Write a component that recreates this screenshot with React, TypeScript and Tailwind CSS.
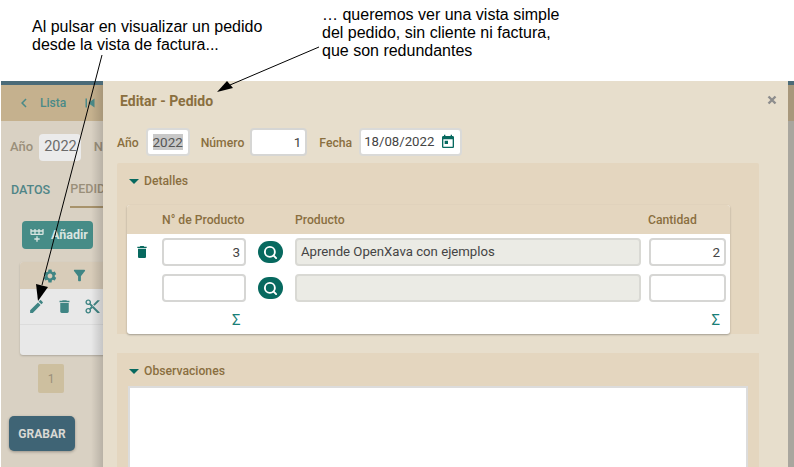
import { Search } from "lucide-react";
import { MdChevronLeft, MdContentCut, MdDelete, MdEdit, MdFilterAlt, MdSettings, MdSkipPrevious, MdToday } from "react-icons/md";

const field = "h-[28px] rounded-[4px] border-2 border-[#d6d6d4] bg-white px-1 text-[13.5px] text-[#444] outline-none";
const readonlyField = "h-[28px] rounded-[4px] border-2 border-[#d9d9d4] bg-[#ebebe5] px-1 text-[13.2px] text-[#444]";

function SearchButton() {
  return (
    <div className="flex h-[22px] w-[25px] items-center justify-center rounded-full bg-[#07695f] text-white">
      <Search size={15} strokeWidth={3} />
    </div>
  );
}

function RowPlusIcon() {
  return (
    <svg viewBox="0 0 24 24" width="16" height="16" fill="currentColor">
      <path d="M22,10A2,2 0 0,1 20,12H4A2,2 0 0,1 2,10V3H4V5H8V3H10V5H14V3H16V5H20V3H22V10M4,10H8V7H4V10M10,10H14V7H10V10M20,10V7H16V10H20M11,14H13V17H16V19H13V22H11V19H8V17H11V14Z" />
    </svg>
  );
}

function BackgroundPanel() {
  return (
    <div className="relative h-[386px] w-[102px] shrink-0 overflow-hidden border-t-4 border-[#4b6b78] bg-[#d9d1c3] font-['Roboto',sans-serif] text-[13px] text-[#9a8f7a]">
      <div className="flex h-[36px] items-center gap-[5px] bg-[#c5b18e] pl-[14px] font-medium text-[#4a8a88]">
        <MdChevronLeft size={18} />
        <span className="w-[38px] pl-[2px] text-[12px]">Lista</span>
        <MdSkipPrevious size={18} />
      </div>
      <div className="flex h-[52px] items-center gap-[6px] pl-[9px] font-medium">
        <span>Año</span>
        <div className="flex h-[27px] w-[43px] items-center justify-end rounded-[4px] bg-[#ebebeb] pr-1 text-[14.5px] font-normal text-[#6a6a6a]">2022</div>
        <span className="ml-[7px]">N</span>
      </div>
      <div className="flex h-[35px] items-center gap-[20px] pl-[10px] text-[12.5px] font-medium">
        <span className="text-[#4f8587]">DATOS</span>
        <span className="flex h-full items-center border-b-2 border-[#a8936c] pr-4">PEDIDOS</span>
      </div>
      <div className="ml-[21px] mt-[13px] flex h-[28px] w-[71px] items-center gap-[6px] rounded-[4px] bg-[#468c87] pl-[7px] text-[12.5px] font-bold text-[#d9e4e0]">
        <RowPlusIcon />
        <span>Añadir</span>
      </div>
      <div className="ml-[19px] mt-[13px] h-[93px] w-[90px] rounded-[3px] bg-[#e8e8e8] shadow-[0_1px_2px_rgba(0,0,0,0.2)]">
        <div className="flex h-[27px] items-center gap-[13px] rounded-t-[3px] bg-[#d8ccb9] pl-[22px] text-[#3f8584]">
          <MdSettings size={16} />
          <MdFilterAlt size={17} />
        </div>
        <div className="flex h-[36px] items-center gap-[11px] border-b border-[#dcdcdc] pl-[8px] text-[#3f8584]">
          <MdEdit size={17} />
          <MdDelete size={17} />
          <MdContentCut size={17} />
        </div>
      </div>
      <div className="ml-[37px] mt-[9px] flex h-[29px] w-[26px] items-center justify-center rounded-[2px] bg-[#cdbf9f] text-[12px]">1</div>
      <div className="ml-[8px] mt-[23px] flex h-[35px] w-[66px] items-center justify-center rounded-[5px] bg-[#3f6475] text-[12px] font-bold text-[#d8d8d4] shadow-[0_1px_3px_rgba(0,0,0,0.3)]">GRABAR</div>
      <div className="absolute inset-y-0 right-0 w-[12px] bg-gradient-to-r from-transparent to-black/15" />
    </div>
  );
}

function Sigma() {
  return <span className="text-[15px] leading-none text-[#1a7f78]">Σ</span>;
}

function SectionTitle({ children }: { children: string }) {
  return (
    <div className="flex items-center gap-[5px] pl-[12px] text-[12.2px] font-medium text-[#8a6f3f]">
      <span className="h-0 w-0 border-x-[5px] border-t-[5px] border-x-transparent border-t-[#07695f]" />
      <span>{children}</span>
    </div>
  );
}

function Modal() {
  return (
    <div className="relative h-[386px] w-[685px] shrink-0 overflow-hidden bg-[#e7decc] pl-[14px] font-['Roboto',sans-serif] text-[#8a6f3f]">
      <h2 className="pl-[3px] pt-[11px] text-[14px] font-bold leading-[18px]">Editar - Pedido</h2>
      <svg viewBox="0 0 10 10" width="10" height="10" className="absolute right-[11px] top-[14px] text-[#8d8d8d]">
        <path d="M1.5 1.5 8.5 8.5M8.5 1.5 1.5 8.5" stroke="currentColor" strokeWidth="2.4" fill="none" />
      </svg>

      <div className="mt-[18px] flex h-[28px] items-center text-[12.2px] font-medium">
        <span className="pt-[2px]">Año</span>
        <div className="ml-[7px] flex h-[28px] w-[44px] items-center justify-center rounded-[4px] border-2 border-[#dadad8] bg-white">
          <span className="bg-[#c8c8c8] text-[13.5px] font-normal leading-[16px] text-[#555]">2022</span>
        </div>
        <span className="ml-[11px] pt-[2px]">Número</span>
        <input readOnly value="1" className={`${field} ml-[6px] w-[57px] text-right font-normal`} />
        <span className="ml-[12px] pt-[2px]">Fecha</span>
        <div className="ml-[7px] flex h-[28px] w-[103px] items-center justify-between rounded-[4px] border-2 border-[#dadad8] bg-white pl-[3px] pr-[4px] text-[13.2px] font-normal text-[#444]">
          <span>18/08/2022</span>
          <MdToday size={16} className="text-[#07695f]" />
        </div>
      </div>

      <section className="mt-[7px] h-[171px] w-[642px] rounded-t-[2px] bg-[#e4d6bf]">
        <div className="pt-[9px]"><SectionTitle>Detalles</SectionTitle></div>
        <div className="ml-[10px] mt-[15px] h-[129px] w-[603px] rounded-[3px] bg-white shadow-[0_1px_2px_rgba(0,0,0,0.3)]">
          <div className="flex h-[29px] items-center rounded-t-[3px] bg-[#e4d6bf] text-[12.2px] font-medium">
            <span className="ml-[35px] w-[133px]">N° de Producto</span>
            <span className="w-[353px]">Producto</span>
            <span>Cantidad</span>
          </div>
          <div className="mt-[4px] flex h-[28px] items-center">
            <MdDelete size={16} className="ml-[7px] text-[#07695f]" />
            <input readOnly value="3" className={`${field} ml-[12px] w-[84px] text-right`} />
            <div className="ml-[12px]"><SearchButton /></div>
            <div className={`${readonlyField} ml-[12px] flex w-[346px] items-center`}>Aprende OpenXava con ejemplos</div>
            <input readOnly value="2" className={`${field} ml-[8px] w-[77px] text-right`} />
          </div>
          <div className="mt-[8px] flex h-[28px] items-center pl-[35px]">
            <input readOnly value="" className={`${field} w-[84px]`} />
            <div className="ml-[12px]"><SearchButton /></div>
            <div className={`${readonlyField} ml-[12px] w-[346px]`} />
            <input readOnly value="" className={`${field} ml-[8px] w-[77px]`} />
          </div>
          <div className="mt-[11px] flex justify-between pl-[105px] pr-[10px]">
            <Sigma />
            <Sigma />
          </div>
        </div>
      </section>

      <section className="mt-[19px] h-[114px] w-[642px] bg-[#e4d6bf]">
        <div className="pt-[9px]"><SectionTitle>Observaciones</SectionTitle></div>
        <div className="ml-[11px] mt-[6px] h-[90px] w-[620px] border-x-2 border-t-2 border-[#dcdcdc] bg-white" />
      </section>
    </div>
  );
}

export default function App() {
  return (
    <div className="relative h-[467px] w-[794px] overflow-hidden bg-white">
      <div className="flex h-[81px] font-['Liberation_Sans',sans-serif] text-[16px] leading-[18px] text-black">
        <p className="ml-[32px] mt-[18px] w-[290px]">
          Al pulsar en visualizar un pedido<br />desde la vista de factura...
        </p>
        <p className="mt-[6px] w-[300px]">
          … queremos ver una vista simple<br />del pedido, sin cliente ni factura,<br />que son redundantes
        </p>
      </div>

      <div className="flex pl-px">
        <BackgroundPanel />
        <Modal />
        <div className="h-[386px] w-[6px] border-t-4 border-[#4b6b78] bg-[#a9a69e]">
          <div className="h-[36px] bg-[#a8987c]" />
        </div>
      </div>

      {/* callout arrows */}
      <svg className="pointer-events-none absolute inset-0" width="794" height="467">
        <line x1="102" y1="55" x2="42" y2="285" stroke="#000" strokeWidth="1" />
        <polygon points="38,301 36,284 48,287" fill="#000" />
        <line x1="319" y1="47" x2="230" y2="85" stroke="#000" strokeWidth="1" />
        <polygon points="217,92 227,81 233,88" fill="#000" />
      </svg>
    </div>
  );
}
